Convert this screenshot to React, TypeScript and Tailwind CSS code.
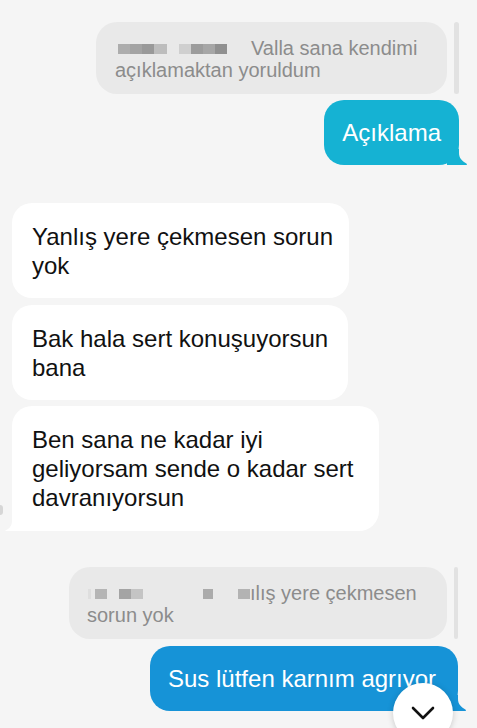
import React from "react";

function Cells({ cells }: { cells: { w: number; c: string; ml?: number }[] }) {
  return (
    <span className="inline-flex items-center align-baseline h-[10px] translate-y-[-1px]">
      {cells.map((cell, i) => (
        <span
          key={i}
          className="inline-block h-[10px]"
          style={{ width: cell.w, background: cell.c, marginLeft: cell.ml ?? 0 }}
        />
      ))}
    </span>
  );
}

function SentTail({ color }: { color: string }) {
  return (
    <svg
      className="absolute right-[-8px] bottom-0"
      width="20"
      height="16"
      viewBox="0 0 20 16"
    >
      <path d="M0 0 H12 V4 C12 9 15 12 20 15 C20 15.6 19.6 16 19 16 H0 Z" fill={color} />
    </svg>
  );
}

export default function App() {
  return (
    <div className="relative w-[477px] h-[728px] overflow-hidden bg-[#f5f5f5] font-['Liberation_Sans',Arial,sans-serif]">
      <div className="flex flex-col pt-[22px]">
        {/* reply 1 */}
        <div className="flex justify-end gap-[7px] pr-[18px]">
          <div className="w-[351px] rounded-[21px] bg-[#e9e9e9] pl-[19px] pr-[14px] pt-[15px] pb-[13px] text-[20px] leading-[22px] text-[#8c8c8c] whitespace-nowrap">
            <span className="pl-[3px]">
              <Cells
                cells={[
                  { w: 12, c: "#adadad" },
                  { w: 12, c: "#a3a3a3" },
                  { w: 12, c: "#999999" },
                  { w: 13, c: "#bdbdbd" },
                ]}
              />
              <Cells
                cells={[
                  { w: 12, c: "#cfcfcf", ml: 12 },
                  { w: 12, c: "#9c9c9c" },
                  { w: 12, c: "#a6a6a6" },
                  { w: 12, c: "#909090" },
                ]}
              />
            </span>
            <span className="pl-[24px]">Valla sana kendimi</span>
            <br />
            açıklamaktan yoruldum
          </div>
          <div className="w-[5px] rounded-full bg-[#e2e2e2]" />
        </div>

        {/* sent 1 */}
        <div className="mt-[6px] flex justify-end pr-[18px]">
          <div className="relative rounded-[20px] bg-[#15b2d3] px-[18px] py-[18px] text-[24px] leading-[29px] text-white whitespace-nowrap">
            Açıklama
            <SentTail color="#15b2d3" />
          </div>
        </div>

        {/* received */}
        <div className="mt-[38px] flex flex-col items-start pl-[12px] text-[24px] leading-[29px] text-[#111111]">
          <div className="w-[337px] rounded-[20px] bg-white px-[20px] pt-[19px] pb-[18px] whitespace-nowrap">
            Yanlış yere çekmesen sorun
            <br />
            yok
          </div>
          <div className="mt-[7px] w-[336px] rounded-[20px] bg-white px-[20px] pt-[19px] pb-[18px] whitespace-nowrap">
            Bak hala sert konuşuyorsun
            <br />
            bana
          </div>
          <div className="relative mt-[6px] w-[367px] rounded-[20px] rounded-bl-none bg-white px-[20px] pt-[19px] pb-[19px] whitespace-nowrap">
            Ben sana ne kadar iyi
            <br />
            geliyorsam sende o kadar sert
            <br />
            davranıyorsun
            <svg className="absolute left-[-7px] bottom-0" width="10" height="14" viewBox="0 0 10 14">
              <path d="M7 0 V4 C7 9 4 12 0.5 13.5 C0 13.8 0.3 14 1 14 H10 V0 Z" fill="#ffffff" />
            </svg>
          </div>
        </div>

        {/* reply 2 */}
        <div className="mt-[36px] flex justify-end gap-[7px] pr-[19px]">
          <div className="w-[378px] rounded-[21px] bg-[#e9e9e9] pl-[18px] pr-[14px] pt-[15px] pb-[13px] text-[20px] leading-[22px] text-[#8c8c8c] whitespace-nowrap">
            <Cells
              cells={[
                { w: 3, c: "#dedede", ml: 1 },
                { w: 12, c: "#b5b5b5", ml: 4 },
                { w: 12, c: "#a4a4a4", ml: 12 },
                { w: 12, c: "#c4c4c4" },
                { w: 10, c: "#ababab", ml: 60 },
                { w: 12, c: "#b3b3b3", ml: 25 },
              ]}
            />
            <span>ılış yere çekmesen</span>
            <br />
            sorun yok
          </div>
          <div className="w-[4px] rounded-full bg-[#e2e2e2]" />
        </div>

        {/* sent 2 */}
        <div className="mt-[7px] flex justify-end pr-[19px]">
          <div className="relative w-[308px] rounded-[20px] bg-[#1693d7] px-[18px] py-[18px] text-[24px] leading-[29px] text-white whitespace-nowrap">
            Sus lütfen karnım agrıyor
            <SentTail color="#1693d7" />
          </div>
        </div>
      </div>

      {/* tiny avatar sliver */}
      <div className="absolute left-0 top-[505px] h-[10px] w-[3px] rounded-r-full bg-[#d6d6d6]" />

      {/* scroll-down button */}
      <div className="absolute left-[393px] top-[683px] flex h-[60px] w-[60px] items-start justify-center rounded-full bg-white pt-[23px] shadow-[0_1px_6px_rgba(0,0,0,0.18)]">
        <svg width="24" height="14" viewBox="0 0 24 14" fill="none">
          <path d="M2 2 L12 12 L22 2" stroke="#111" strokeWidth="2.6" strokeLinecap="round" strokeLinejoin="round" />
        </svg>
      </div>
    </div>
  );
}
